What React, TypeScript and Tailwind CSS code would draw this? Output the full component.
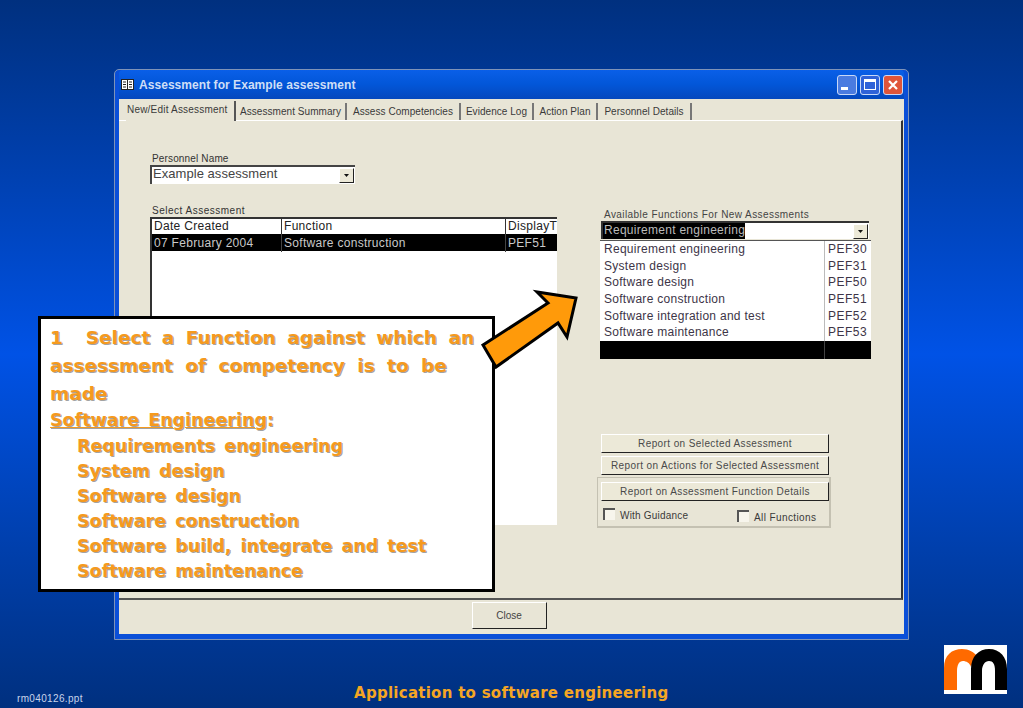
const rows = [
  ["Requirement engineering", "PEF30"],
  ["System design", "PEF31"],
  ["Software design", "PEF50"],
  ["Software construction", "PEF51"],
  ["Software integration and test", "PEF52"],
  ["Software maintenance", "PEF53"],
];

const tabs = [
  { label: "Assessment Summary", w: "w-[111px]" },
  { label: "Assess Competencies", w: "w-[114px]" },
  { label: "Evidence Log", w: "w-[73px]" },
  { label: "Action Plan", w: "w-[64px]" },
  { label: "Personnel Details", w: "w-[94px]" },
];

const subjects = [
  "Requirements engineering",
  "System design",
  "Software design",
  "Software construction",
  "Software build, integrate and test",
  "Software maintenance",
];

function DropArrow() {
  return (
    <div className="w-[15px] h-[15px] mr-[1px] shrink-0 flex items-center justify-center bg-[#ece9d8] border-r border-b border-[#222] border-t border-l border-t-white border-l-white">
      <svg width="5" height="3" viewBox="0 0 5 3">
        <path d="M0 0h5L2.5 3z" fill="#111" />
      </svg>
    </div>
  );
}

function ReportButton({ label, className }: { label: string; className: string }) {
  return (
    <div className={`w-[228px] flex items-center justify-center bg-[#ece9d8] border-t border-l border-white border-r border-b border-r-[#222] border-b-[#222] text-[10px] tracking-[0.4px] text-[#4a4a4a] ${className}`}>
      {label}
    </div>
  );
}

function CheckBox() {
  return <div className="w-[12px] h-[12px] bg-[#f7f5ec] border-t-2 border-l-2 border-[#555] shrink-0" />;
}

function TitleButton({ children, bg }: { children: React.ReactNode; bg: string }) {
  return (
    <div className={`w-[20px] h-[20px] rounded-[3px] border border-[#c8d8f8] flex items-center justify-center ${bg}`}>
      {children}
    </div>
  );
}

export default function App() {
  return (
    <div className="relative w-full h-[708px] overflow-hidden flex flex-col bg-linear-to-b from-[#00307f] via-[#0052e6] to-[#00307f] font-['Liberation_Sans',Arial,sans-serif]">
      <div className="pl-[114px] pt-[69px]">
        {/* window */}
        <div className="w-[795px] h-[571px] flex flex-col bg-[#0a4fd8] border border-[#7f93b8] rounded-t-[5px] px-[4px] pb-[5px]">
          <div className="h-[29px] shrink-0 flex items-center bg-linear-to-b from-[#0a5fe8] via-[#0256d8] to-[#0548bd] rounded-t-[4px]">
            <svg width="13" height="11" viewBox="0 0 13 11" className="ml-[2px] mr-[5px]">
              <rect x="0.5" y="0.5" width="12" height="10" fill="#fff" stroke="#222" />
              <path d="M2 3h3M2 5.5h3M2 8h3M8 3h3M8 5.5h3M8 8h3" stroke="#222" strokeWidth="1" />
              <path d="M6.5 1v9" stroke="#222" />
            </svg>
            <span className="text-[12px] font-bold tracking-[0.05px] text-[#cfdff6] pt-[1px]">Assessment for Example assessment</span>
            <div className="ml-auto mr-[1px] flex gap-[3px]">
              <TitleButton bg="bg-[#4a7be0]">
                <div className="w-[7px] h-[3px] bg-white mt-[8px] mr-[5px]" />
              </TitleButton>
              <TitleButton bg="bg-[#2f62d8]">
                <div className="w-[12px] h-[11px] border border-white border-t-[3px]" />
              </TitleButton>
              <TitleButton bg="bg-[#e0553a]">
                <svg width="12" height="12" viewBox="0 0 12 12">
                  <path d="M2 2l8 8M10 2l-8 8" stroke="#fff" strokeWidth="2.2" />
                </svg>
              </TitleButton>
            </div>
          </div>

          <div className="flex-1 flex flex-col bg-[#e8e5d6] min-h-0">
            {/* tabs */}
            <div className="h-[21px] shrink-0 flex items-end pl-[7px] text-[10px] tracking-[0.05px] text-[#3a3a3a]">
              <div className="w-[110px] h-[20px] pt-[1px] pl-[1px] border-r-2 border-[#555] -mb-[1px] relative z-10 bg-[#e8e5d6] whitespace-nowrap tracking-[0.2px]">New/Edit Assessment</div>
              {tabs.map((t) => (
                <div key={t.label} className={`${t.w} h-[17px] flex items-center justify-center border-r-2 border-[#777] whitespace-nowrap`}>
                  {t.label}
                </div>
              ))}
            </div>

            {/* page */}
            <div className="h-[480px] shrink-0 flex border-t border-white border-r-2 border-r-[#333] border-b-2 border-b-[#555] mr-[1px]">
              <div className="w-[438px] pl-[31px] shrink-0 text-[#333]">
                <div className="mt-[32px] pl-[2px] h-[12px] leading-[12px] text-[10px] tracking-[0.15px]">Personnel Name</div>
                <div className="w-[205px] h-[19px] flex items-center justify-between bg-white border-t-2 border-l-2 border-[#444] text-[13px] tracking-[0.05px] text-[#444] pl-[1px]">
                  <span className="pb-[3px]">Example assessment</span>
                  <DropArrow />
                </div>
                <div className="mt-[20px] pl-[2px] h-[13px] leading-[13px] text-[10px] tracking-[0.5px]">Select Assessment</div>
                <div className="w-[407px] h-[308px] bg-white border-t-2 border-l-2 border-[#333] text-[12px] tracking-[0.3px]">
                  <div className="grid grid-cols-[129px_224px_1fr] h-[15px] leading-[15px] text-[#222]">
                    <div className="pl-[2px]">Date Created</div>
                    <div className="pl-[2px] border-l border-[#333]">Function</div>
                    <div className="pl-[2px] border-l border-[#333] whitespace-nowrap">DisplayT</div>
                  </div>
                  <div className="grid grid-cols-[129px_224px_1fr] h-[17px] leading-[18px] bg-black text-[#c9c9c9]">
                    <div className="pl-[2px]">07 February 2004</div>
                    <div className="pl-[2px] border-l border-[#444]">Software construction</div>
                    <div className="pl-[2px] border-l border-[#444]">PEF51</div>
                  </div>
                </div>
              </div>

              <div className="flex-1 min-w-0 pl-[40px] text-[#333]">
                <div className="mt-[87px] ml-[7px] h-[13px] leading-[13px] text-[10px] tracking-[0.42px] text-[#444]">Available Functions For New Assessments</div>
                <div className="ml-[4px] w-[268px] h-[18px] flex items-center justify-between bg-white border-t-2 border-l-2 border-[#333] text-[12px] tracking-[0.28px]">
                  <span className="bg-black text-[#bbb] h-full leading-[15px] pl-[1px]">Requirement engineering</span>
                  <DropArrow />
                </div>
                <div className="mt-[1px] ml-[3px] w-[271px] h-[119px] bg-black border-t border-[#555]">
                  {rows.map(([name, code]) => (
                    <div key={code} className="grid grid-cols-[224px_1fr] h-[16.7px] leading-[16px] bg-white text-[12px] text-[#3d3547]">
                      <div className="pl-[4px] tracking-[0.28px]">{name}</div>
                      <div className="pl-[3px] border-l border-[#bbb] tracking-[0.5px]">{code}</div>
                    </div>
                  ))}
                  <div className="ml-[224px] h-[18px] border-l border-[#444]" />
                </div>

                <div className="mt-[75px] ml-[4px] flex flex-col gap-[3px]">
                  <ReportButton label="Report on Selected Assessment" className="h-[19px]" />
                  <ReportButton label="Report on Actions for Selected Assessment" className="h-[19px]" />
                </div>
                <div className="mt-[2px] w-[234px] h-[51px] border border-[#c4c1b2] border-b-2 border-r-2 pl-[3px] pt-[4px]">
                  <ReportButton label="Report on Assessment Function Details" className="h-[19px]" />
                  <div className="mt-[7px] ml-[2px] flex items-start text-[10px] tracking-[0.2px] text-[#3a3a3a]">
                    <CheckBox />
                    <span className="ml-[5px] w-[117px]">With Guidance</span>
                    <div className="mt-[2px] flex items-start">
                      <CheckBox />
                      <span className="ml-[5px] tracking-[0.4px]">All Functions</span>
                    </div>
                  </div>
                </div>
              </div>
            </div>

            {/* bottom bar */}
            <div className="flex-1 flex justify-center pt-[2px] pr-[5px]">
              <div className="w-[75px] h-[27px] flex items-center justify-center border-t border-l border-white border-r border-b border-r-[#222] border-b-[#222] text-[10px] text-[#444]">
                Close
              </div>
            </div>
          </div>
        </div>
      </div>

      {/* footer */}
      <div className="flex-1 relative flex items-end">
        <span className="ml-[17px] mb-[2px] text-[10px] tracking-[0.35px] text-[#c8d4ea] w-[337px]">rm040126.ppt</span>
        <span className="mb-[4px] text-[15px] font-bold tracking-[0.27px] text-[#f5a623] font-['DejaVu_Sans',sans-serif]">Application to software engineering</span>
        <div className="absolute left-[944px] top-[5px] w-[63px] h-[49px] bg-white">
          <svg width="63" height="49" viewBox="0 0 63 49">
            <path d="M0 45V23C0 10 8 4 18 4C25 4 30 7 34 12C30 14 28 18 27 22C26 18 22 16 19 16C15 16 13 20 13 26V45Z" fill="#ff6a00" />
            <path d="M27 45V24C27 11 35 4 45 4C56 4 63 12 63 24V45H51V26C51 19 49 16 45 16C41 16 38 20 38 26V45Z" fill="#000" />
          </svg>
        </div>
      </div>

      {/* callout */}
      <div className="absolute left-[38px] top-[316px] w-[457px] h-[276px] bg-white border-[3px] border-black pl-[9px] pt-[5px] font-['DejaVu_Sans',sans-serif] font-bold text-[#f59a1e] [text-shadow:1px_1px_0_#a3a3a3]">
        <div className="text-[18.5px] leading-[28px] [word-spacing:5px]">1&nbsp; Select a Function against which an</div>
        <div className="text-[18.5px] leading-[28px] [word-spacing:6px]">assessment of competency is to be</div>
        <div className="text-[18.5px] leading-[28px]">made</div>
        <div className="text-[17.5px] leading-[25px] [word-spacing:3px]"><span className="underline">Software Engineering</span>:</div>
        <div className="mt-[1px]">
          {subjects.map((s) => (
            <div key={s} className="text-[17.5px] leading-[25px] pl-[27px] [word-spacing:3px]">{s}</div>
          ))}
        </div>
      </div>

      {/* arrow */}
      <svg className="absolute left-[480px] top-[288px]" width="100" height="84" viewBox="0 0 100 84">
        <path d="M3 57L68 15 57 4 96 10 87 49 78 35 16 79z" fill="#ff9a0a" stroke="#000" strokeWidth="3" strokeLinejoin="miter" />
      </svg>
    </div>
  );
}
